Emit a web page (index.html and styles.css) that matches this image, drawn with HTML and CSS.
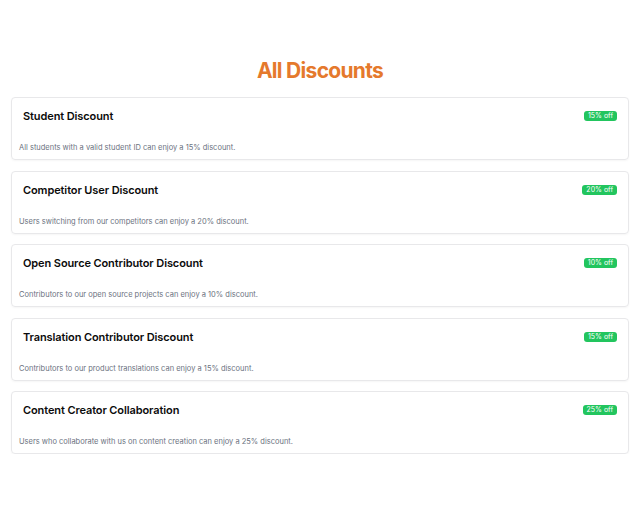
FILE: index.html
```html
<!DOCTYPE html>
<html>
<head>
<meta charset="utf-8">
<link rel="stylesheet" href="styles.css">
</head>
<body>
<main class="page">
  <h1 class="page-title">All Discounts</h1>
  <div class="list">
    <section class="card">
      <div class="card-head"><h2 class="card-title">Student Discount</h2><span class="badge">15% off</span></div>
      <p class="card-desc">All students with a valid student ID can enjoy a 15% discount.</p>
    </section>
    <section class="card">
      <div class="card-head"><h2 class="card-title">Competitor User Discount</h2><span class="badge">20% off</span></div>
      <p class="card-desc">Users switching from our competitors can enjoy a 20% discount.</p>
    </section>
    <section class="card">
      <div class="card-head"><h2 class="card-title">Open Source Contributor Discount</h2><span class="badge">10% off</span></div>
      <p class="card-desc">Contributors to our open source projects can enjoy a 10% discount.</p>
    </section>
    <section class="card">
      <div class="card-head"><h2 class="card-title">Translation Contributor Discount</h2><span class="badge">15% off</span></div>
      <p class="card-desc">Contributors to our product translations can enjoy a 15% discount.</p>
    </section>
    <section class="card">
      <div class="card-head"><h2 class="card-title">Content Creator Collaboration</h2><span class="badge">25% off</span></div>
      <p class="card-desc">Users who collaborate with us on content creation can enjoy a 25% discount.</p>
    </section>
  </div>
</main>
</body>
</html>
```
FILE: styles.css
```css
* { box-sizing: border-box; }
html, body { margin: 0; padding: 0; background: #fff; }
body { font-family: Inter, "Noto Sans", sans-serif; color: #111; }
.page { padding: 57px 11px 0; }
.page-title {
  margin: 0 0 12px;
  text-align: center;
  font-size: 21px;
  line-height: 28px;
  font-weight: 700;
  letter-spacing: -0.7px;
  color: #e5792c;
}
.list { display: flex; flex-direction: column; gap: 10.5px; }
.card {
  border: 1px solid #e8e8ea;
  border-radius: 4px;
  box-shadow: 0 1px 2px rgba(0,0,0,0.04);
  height: 63px;
}
.card-head {
  display: flex;
  justify-content: space-between;
  align-items: center;
  padding: 10px 11px 0 11px;
}
.card-title { margin: 0; font-size: 11px; line-height: 16px; font-weight: 600; letter-spacing: -0.1px; color: #0b0b0b; }
.badge {
  background: #22c55e;
  color: #fff;
  font-size: 7px;
  line-height: 10px;
  padding: 0 4px;
  border-radius: 3px;
}
.card-desc { margin: 19px 0 0 7px; font-size: 7.5px; line-height: 10px; color: #6b7280; }
```
